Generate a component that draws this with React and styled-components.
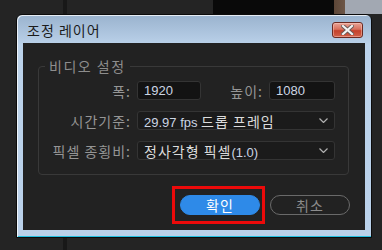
import React from "react";
import styled, { createGlobalStyle } from "styled-components";

const GlobalStyle = createGlobalStyle`
  html, body {
    margin: 0;
    padding: 0;
    background: #242424;
  }
  * { box-sizing: border-box; }
`;

const KR = `"Noto Sans CJK KR", "Noto Sans", sans-serif`;
const LATIN = `"Liberation Sans", Arial, sans-serif`;

const Desktop = styled.div`
  position: relative;
  width: 382px;
  height: 250px;
  overflow: hidden;
  background:
    linear-gradient(to right, transparent 213px, #090909 213px, #090909 334px, #5c4637 334px, #6d5647 345px, #a2a8b2 345px) top left / 100% 14px no-repeat,
    linear-gradient(to right, transparent 63px, #181818 63px, #181818 67px, transparent 67px),
    #242424;
`;

const Window = styled.div`
  position: absolute;
  left: 16px;
  top: 14px;
  width: 356px;
  height: 224px;
  display: flex;
  flex-direction: column;
  border: 1px solid #0c0c0c;
  border-radius: 6px 6px 0 0;
  padding: 0 6px 7px 6px;
  background: linear-gradient(#9ab3ce 0px, #b4cbe4 24px, #bcd3eb 30px, #bad1ea 100%);
  box-shadow: inset 1px 1px 0 rgba(255, 255, 255, 0.75), inset 0 -1px 0 #22bfe0;
`;

const TitleBar = styled.div`
  height: 28px;
  flex: none;
  display: flex;
  align-items: center;
  justify-content: space-between;
  padding: 0 2px 0 4px;
`;

const Title = styled.span`
  font-family: ${KR};
  font-size: 14px;
  letter-spacing: 1px;
  color: #1b1b1b;
  margin-top: 2px;
`;

const CloseButton = styled.div`
  width: 31px;
  height: 16px;
  margin-top: 2px;
  border: 1px solid #6b2a22;
  border-radius: 3px;
  background: linear-gradient(#e9a497 0%, #d8705c 45%, #c4412b 55%, #d06049 100%);
  box-shadow: inset 0 0 0 1px rgba(255, 210, 200, 0.45);
  display: flex;
  align-items: center;
  justify-content: center;
`;

const Content = styled.div`
  flex: 1;
  background: #222222;
  padding: 14px 15px 0 15px;
  display: flex;
  flex-direction: column;
`;

const Group = styled.fieldset`
  margin: 0 1px 0 0;
  padding: 6px 0 14px 0;
  border: 1px solid #393939;
  border-radius: 4px;
  display: flex;
  flex-direction: column;
  gap: 11px;
`;

const Legend = styled.legend`
  margin-left: 6px;
  padding: 0 4px;
  font-family: ${KR};
  font-size: 14px;
  letter-spacing: 1.5px;
  color: #8d8d8d;
  line-height: 18px;
`;

const Row = styled.div`
  display: flex;
  align-items: center;
  height: 19px;
`;

const Label = styled.span`
  width: ${(p) => p.$w}px;
  flex: none;
  text-align: right;
  padding-right: 6px;
  font-family: ${KR};
  font-size: 14px;
  letter-spacing: 1px;
  color: #959595;
  white-space: nowrap;
`;

const Field = styled.div`
  width: ${(p) => p.$w}px;
  height: 19px;
  flex: none;
  display: flex;
  align-items: center;
  justify-content: space-between;
  padding: 0 6px;
  background: ${(p) => (p.$select ? "#1b1b1b" : "#131313")};
  border: 1px solid #343434;
  border-radius: 3px;
  font-family: ${LATIN};
  font-size: 13px;
  color: #cdd6e4;
  white-space: nowrap;
`;

const Num = styled.span`
  font-family: ${LATIN};
  font-size: 13px;
  color: #cbd5e3;
`;

const Hangul = styled.span`
  font-family: ${KR};
  font-size: 14px;
  letter-spacing: 1px;
  color: #dcdcdc;
`;

const Buttons = styled.div`
  display: flex;
  justify-content: flex-end;
  gap: 10px;
  margin-top: 20px;
`;

const Button = styled.div`
  width: 80px;
  height: 20px;
  border-radius: 10px;
  display: flex;
  align-items: center;
  justify-content: center;
  font-family: ${KR};
  font-size: 14px;
  letter-spacing: 1px;
  background: ${(p) => (p.$primary ? "#2e8ae8" : "transparent")};
  border: 1px solid ${(p) => (p.$primary ? "#2e8ae8" : "#6a6a6a")};
  color: ${(p) => (p.$primary ? "#ffffff" : "#8c8c8c")};
`;

const Highlighted = styled.div`
  position: relative;
`;

const Marker = styled.span`
  position: absolute;
  left: -8px;
  right: -5px;
  top: -9px;
  bottom: -9px;
  border: 3px solid #ec0a0a;
  pointer-events: none;
`;

const Chevron = () => (
  <svg width="9" height="5" viewBox="0 0 9 5">
    <path d="M0.5 0.5 L4.5 4.5 L8.5 0.5" fill="none" stroke="#b0b0b0" strokeWidth="1.2" />
  </svg>
);

const CloseX = () => (
  <svg width="13" height="10" viewBox="0 0 13 10">
    <path d="M2 1 L11 9 M11 1 L2 9" stroke="#6a5a58" strokeWidth="4" strokeLinecap="square" />
    <path d="M2 1 L11 9 M11 1 L2 9" stroke="#f4f4f4" strokeWidth="2.2" strokeLinecap="square" />
  </svg>
);

export default function App() {
  return (
    <>
      <GlobalStyle />
      <Desktop>
        <Window>
          <TitleBar>
            <Title>조정 레이어</Title>
            <CloseButton>
              <CloseX />
            </CloseButton>
          </TitleBar>
          <Content>
            <Group>
              <Legend>비디오 설정</Legend>
              <Row>
                <Label $w={98}>폭:</Label>
                <Field $w={64}>1920</Field>
                <Label $w={68}>높이:</Label>
                <Field $w={66}>1080</Field>
              </Row>
              <Row>
                <Label $w={98}>시간기준:</Label>
                <Field $w={198} $select>
                  <span>
                    <Num>29.97 fps </Num>
                    <Hangul>드롭 프레임</Hangul>
                  </span>
                  <Chevron />
                </Field>
              </Row>
              <Row>
                <Label $w={98}>픽셀 종횡비:</Label>
                <Field $w={198} $select>
                  <span>
                    <Hangul>정사각형 픽셀</Hangul>
                    <Num>(1.0)</Num>
                  </span>
                  <Chevron />
                </Field>
              </Row>
            </Group>
            <Buttons>
              <Highlighted>
                <Button $primary>확인</Button>
                <Marker />
              </Highlighted>
              <Button>취소</Button>
            </Buttons>
          </Content>
        </Window>
      </Desktop>
    </>
  );
}
